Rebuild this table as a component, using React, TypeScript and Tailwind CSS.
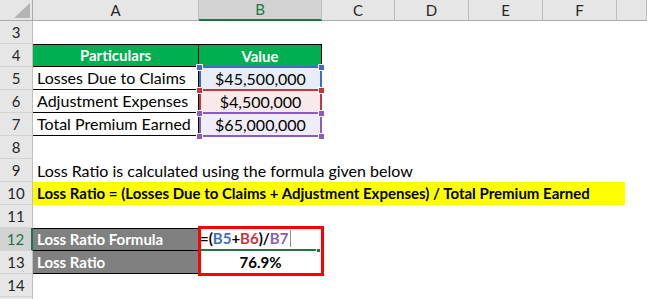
const font = { fontFamily: "Lato, 'Liberation Sans', sans-serif" };

const letters = ["A", "B", "C", "D", "E", "F", ""];

function RowHead({ n, active }: { n?: number; active?: boolean }) {
  return (
    <div
      className={`h-[23px] flex items-center justify-center border-b border-[#d4d4d4] text-[15px] ${
        active
          ? "bg-[#d2d2d2] text-[#217346] border-r-2 border-r-[#217346]"
          : "bg-[#e6e6e6] text-[#262626] border-r border-r-[#bfbfbf]"
      }`}
    >
      {n}
    </div>
  );
}

function Blank({ span = 7 }: { span?: number }) {
  return <div className={`h-[23px] ${span === 7 ? "col-span-7" : span === 5 ? "col-span-5" : ""}`} />;
}

function RefCell({
  value,
  line,
  fill,
}: {
  value: string;
  line: string;
  fill: string;
}) {
  return (
    <div className="relative h-[23px]">
      <div
        className="absolute -top-px left-0 right-0 bottom-[-1px] border-2 flex items-center justify-center text-[16px] text-black"
        style={{ borderColor: line, background: fill }}
      >
        {value}
      </div>
      {[
        "-top-[3px] -left-[3px]",
        "-top-[3px] -right-[3px]",
        "-bottom-[4px] -left-[3px]",
        "-bottom-[4px] -right-[3px]",
      ].map((p) => (
        <span
          key={p}
          className={`absolute ${p} w-[7px] h-[7px] border border-white z-10`}
          style={{ background: line }}
        />
      ))}
    </div>
  );
}

const rows = [
  { label: "Losses Due to Claims", value: "$45,500,000", line: "#3a6fc6", fill: "#e7eef9" },
  { label: "Adjustment Expenses", value: "$4,500,000", line: "#c4363d", fill: "#f9e9ea" },
  { label: "Total Premium Earned", value: "$65,000,000", line: "#8a5cbf", fill: "#f1edf8" },
];

export default function App() {
  return (
    <div className="w-[647px] h-[299px] overflow-hidden bg-white" style={font}>
      <div className="grid grid-cols-[33px_166px_123px_73px_74px_74px_74px_30px]">
        {/* column headers */}
        <div className="relative h-[21px] bg-[#e6e6e6] border-r border-b border-[#ababab]">
          <svg className="absolute left-[14px] top-[3px]" width="16" height="15" viewBox="0 0 16 15">
            <polygon points="16,0 16,15 0,15" fill="#b4b4b4" />
          </svg>
        </div>
        {letters.map((l) => (
          <div
            key={l || "g"}
            className={`h-[21px] flex items-center justify-center text-[15px] border-r ${
              l === "B"
                ? "bg-[#d2d2d2] text-[#217346] border-r-[#bdbdbd] border-b-2 border-b-[#217346]"
                : "bg-[#e6e6e6] text-[#262626] border-r-[#bdbdbd] border-b border-b-[#ababab]"
            }`}
          >
            {l}
          </div>
        ))}

        {/* row 3 */}
        <RowHead n={3} />
        <Blank />

        {/* row 4 */}
        <RowHead n={4} />
        <div className="h-[23px] bg-[#00b050] border-t border-r border-b border-black flex items-center justify-center text-white font-bold text-[15px]">
          Particulars
        </div>
        <div className="h-[23px] bg-[#00b050] border-t border-r border-black flex items-center justify-center text-white font-bold text-[15px]">
          Value
        </div>
        <Blank span={5} />

        {/* rows 5-7 */}
        {rows.map((r, i) => (
          <div key={r.label} className="contents">
            <RowHead n={5 + i} />
            <div className="h-[23px] border-b border-r border-black flex items-center px-1 text-[16px] text-black whitespace-nowrap">
              {r.label}
            </div>
            <RefCell value={r.value} line={r.line} fill={r.fill} />
            <Blank span={5} />
          </div>
        ))}

        {/* row 8 */}
        <RowHead n={8} />
        <Blank />

        {/* row 9 */}
        <RowHead n={9} />
        <div className="col-span-7 h-[23px] flex items-center px-1 text-[16px] text-black whitespace-nowrap">
          Loss Ratio is calculated using the formula given below
        </div>

        {/* row 10 */}
        <RowHead n={10} />
        <div className="col-span-7 h-[23px] flex items-center">
          <div className="w-[592px] h-[23px] bg-[#ffff00] flex items-center px-1 text-[15px] font-bold text-black whitespace-nowrap">
            Loss Ratio = (Losses Due to Claims + Adjustment Expenses) / Total Premium Earned
          </div>
        </div>

        {/* row 11 */}
        <RowHead n={11} />
        <Blank />

        {/* row 12 */}
        <RowHead n={12} active />
        <div className="h-[23px] bg-[#808080] border-t border-b border-r border-black flex items-center px-1 text-white font-bold text-[15px] whitespace-nowrap">
          Loss Ratio Formula
        </div>
        <div className="row-span-2 relative">
          <div className="h-[23px] flex items-center pl-[1px] text-[15px] font-bold text-black border-b-2 border-[#217346]">
            <span>=(</span>
            <span className="text-[#3a6fc6]">B5</span>
            <span>+</span>
            <span className="text-[#c4363d]">B6</span>
            <span>)/</span>
            <span className="text-[#8a5cbf]">B7</span>
            <span className="ml-[2px] w-px h-[17px] bg-[#8c8c8c]" />
          </div>
          <div className="h-[23px] flex items-center justify-center text-[15px] font-bold text-black">
            76.9%
          </div>
          <span className="absolute right-[1px] top-[20px] w-[5px] h-[5px] bg-[#217346] border border-white" />
          <div className="absolute -left-px -top-[2px] -right-[2px] -bottom-[2px] border-[3px] border-[#ff0000] pointer-events-none" />
        </div>
        <Blank span={5} />

        {/* row 13 */}
        <RowHead n={13} />
        <div className="h-[23px] bg-[#808080] border-b border-r border-black flex items-center px-1 text-white font-bold text-[15px]">
          Loss Ratio
        </div>
        <Blank span={5} />

        {/* row 14-15 */}
        <RowHead n={14} />
        <Blank />
        <RowHead />
        <Blank />
      </div>
    </div>
  );
}
